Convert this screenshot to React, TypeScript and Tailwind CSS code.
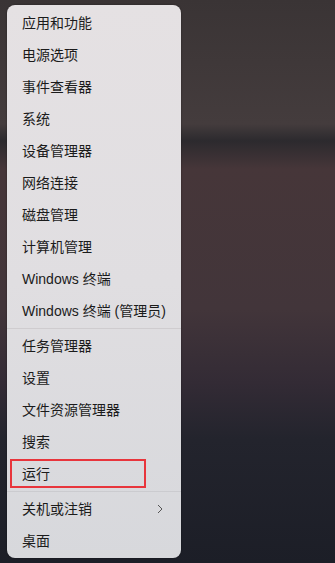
const groupA = [
  '应用和功能',
  '电源选项',
  '事件查看器',
  '系统',
  '设备管理器',
  '网络连接',
  '磁盘管理',
  '计算机管理',
  'Windows 终端',
  'Windows 终端 (管理员)',
];

const groupB = ['任务管理器', '设置', '文件资源管理器', '搜索', '运行'];

function Item({ label, boxed, arrow }: { label: string; boxed?: boolean; arrow?: boolean }) {
  return (
    <div className="relative h-[32px] flex items-center pl-[15px] pr-[18px] text-[14px] text-[#1b1b1b] whitespace-nowrap">
      <span className="flex-1">{label}</span>
      {arrow && (
        <svg width="6" height="10" viewBox="0 0 6 10" className="text-[#555]">
          <path d="M1 1l4 4-4 4" fill="none" stroke="currentColor" strokeWidth="1" />
        </svg>
      )}
      {boxed && (
        <div className="absolute left-[3px] top-[1px] w-[136px] h-[29px] border-2 border-[#e8353c]" />
      )}
    </div>
  );
}

export default function App() {
  return (
    <div
      className="w-[335px] h-[563px] overflow-hidden bg-[linear-gradient(180deg,#3a3435_0%,#443c3d_22%,#2c2a2e_25%,#463639_30%,#42353a_55%,#332b35_68%,#23242d_78%,#1c1e27_100%)] pt-[5px] pl-[7px]"
      style={{ fontFamily: '"Liberation Sans", "Noto Sans CJK SC", sans-serif' }}
    >
      <div className="w-[174px] rounded-[8px] bg-[linear-gradient(180deg,#e5e1e3_0%,#e0dee1_50%,#d7d8dc_100%)] pt-[2px] pb-[1px] shadow-[0_0_2px_rgba(0,0,0,0.4)]">
        {groupA.map((l) => (
          <Item key={l} label={l} />
        ))}
        <div className="h-px bg-[#cfcccf] my-[1px]" />
        {groupB.map((l) => (
          <Item key={l} label={l} boxed={l === '运行'} />
        ))}
        <div className="h-px bg-[#cbcbcf] my-[1px]" />
        <Item label="关机或注销" arrow />
        <Item label="桌面" />
      </div>
    </div>
  );
}
